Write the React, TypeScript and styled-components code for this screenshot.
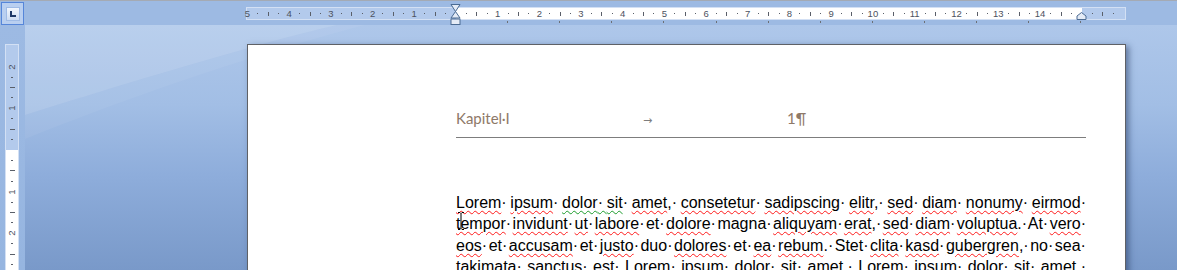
import React from "react"
import styled, { createGlobalStyle } from "styled-components"

// one quarter of a centimetre on the rulers at this zoom level
const Q = 10.425

const GlobalStyle = createGlobalStyle`
  html, body {
    margin: 0;
    padding: 0;
    overflow: hidden;
    background: #9dbae3;
  }
`

const Window = styled.div`
  display: grid;
  grid-template-columns: 25px 1fr;
  grid-template-rows: 24px 1fr;
  height: 270px;
  box-sizing: border-box;
  border-top: 1px solid #a4aab4;
  background: #9dbae3;
  font-family: "Liberation Sans", Arial, sans-serif;
`

const TabSelector = styled.div`
  margin: 1px 0 0 1px;
  width: 23px;
  height: 23px;
  box-sizing: border-box;
  border: 1px solid #5686d9;
  background: #b9cff0;
  display: flex;
  align-items: center;
  justify-content: center;
`

const TabFace = styled.div`
  width: 14px;
  height: 14px;
  box-sizing: border-box;
  border: 1px solid #9fbbe6;
  background: linear-gradient(#f3f7fd, #cddcf3);
  display: flex;
  align-items: center;
  justify-content: center;
`

const LGlyph = styled.span`
  width: 4px;
  height: 4px;
  margin: 1px 0 0 1px;
  border-left: 2px solid #1e3968;
  border-bottom: 2px solid #1e3968;
`

const TopBar = styled.div`
  display: flex;
  flex-direction: column;
  padding: 6px 0 0 221px;
`

const HRuler = styled.div`
  position: relative;
  width: 880px;
  height: 13px;
  box-sizing: border-box;
  border: 1px solid #d3e0f4;
  background: linear-gradient(
    to right,
    #b3caec 0 209px,
    #ffffff 209px 835px,
    #b3caec 835px
  );
`

const TickRow = styled.div<{ $vertical?: boolean }>`
  display: flex;
  flex-direction: ${(p) => (p.$vertical ? "column" : "row")};
  ${(p) => (p.$vertical ? "margin-top: -4.46px;" : "margin-left: -4.71px;")}
  ${(p) => (p.$vertical ? "width: 100%;" : "height: 100%;")}
`

const Cell = styled.div<{ $vertical?: boolean }>`
  flex: 0 0 ${Q}px;
  display: flex;
  align-items: center;
  justify-content: center;
`

const Num = styled.span<{ $vertical?: boolean }>`
  font-size: 9.5px;
  line-height: 10px;
  color: #4c5260;
  white-space: nowrap;
  ${(p) => (p.$vertical ? "transform: rotate(-90deg);" : "")}
`

const Tick = styled.span<{ $vertical?: boolean; $half?: boolean }>`
  background: #5a5f69;
  ${(p) =>
    p.$vertical
      ? `width: ${p.$half ? 5 : 2}px; height: 1px;`
      : `width: 1px; height: ${p.$half ? 4 : 1}px;`}
`

const IndentMarker = styled.svg<{ $left: number; $top: number }>`
  position: absolute;
  left: ${(p) => p.$left}px;
  top: ${(p) => p.$top}px;
  overflow: visible;
`

const TabStops = styled.div`
  margin: 1px 0 0 210px;
  width: 628px;
  height: 2px;
  background: repeating-linear-gradient(
    to right,
    transparent 0 51.1px,
    #6c6f75 51.1px 52.1px
  );
`

const LeftStrip = styled.div`
  padding: 19px 0 0 5px;
  background: linear-gradient(#9dbae3, #96b5e0);
  overflow: hidden;
`

const VRuler = styled.div`
  width: 14px;
  height: 260px;
  box-sizing: border-box;
  border: 1px solid #d3e0f4;
  background: linear-gradient(to bottom, #b3caec 0 105px, #ffffff 105px);
`

const Canvas = styled.div`
  position: relative;
  overflow: hidden;
  background: linear-gradient(
    180deg,
    #aec7ea 0px,
    #a2bee5 80px,
    #8eaddb 150px,
    #7999c9 245px
  );
`

const Swoosh = styled.svg`
  position: absolute;
  left: 0;
  top: 0;
  width: 100%;
  height: 100%;
`

const Page = styled.div`
  position: relative;
  margin: 19px 0 0 222px;
  width: 879px;
  height: 320px;
  box-sizing: border-box;
  padding: 63px 39px 0 208px;
  background: #ffffff;
  border: 1px solid #5f6166;
  box-shadow: 3px 2px 6px rgba(25, 45, 85, 0.5);
`

const Header = styled.div`
  display: grid;
  grid-template-columns: 187px 144px auto;
  align-items: baseline;
  padding-bottom: 6px;
  border-bottom: 1px solid #7d7d7d;
  font-family: Lato, "Open Sans", sans-serif;
  font-size: 15px;
  line-height: 20px;
  color: #8e7968;
`

const TabArrow = styled.span`
  font-family: "DejaVu Sans", sans-serif;
  font-size: 11px;
  color: #7d7d7d;
`

const Body = styled.div`
  position: relative;
  margin-top: 54px;
  font-family: "Liberation Sans", Arial, sans-serif;
  font-size: 16px;
  line-height: 21.3px;
  color: #000000;
`

const Line = styled.div`
  text-align: justify;
  text-align-last: justify;
`

const Dot = styled.span`
  display: inline-block;
  width: 0;
  white-space: nowrap;
`

const Squiggle = styled.span<{ $tone: "r" | "g" }>`
  text-decoration-line: underline;
  text-decoration-style: wavy;
  text-decoration-color: ${(p) => (p.$tone === "r" ? "#ff1a1a" : "#1c9c2c")};
  text-decoration-thickness: 1px;
  text-underline-offset: 2px;
`

const IBeam = styled.svg`
  position: absolute;
  left: 1px;
  top: 20px;
`

// * = spelling mark, + = grammar mark, _ = space inside one marked group
const bodyLines = [
  "*Lorem *ipsum +dolor_sit *amet, *consetetur *sadipscing *elitr, *sed *diam *nonumy *eirmod",
  "*tempor *invidunt *ut *labore et *dolore magna *aliquyam *erat, *sed *diam *voluptua. At *vero",
  "*eos et *accusam et *justo duo *dolores et *ea *rebum. Stet *clita *kasd *gubergren, no sea",
  "*takimata *sanctus *est *Lorem *ipsum *dolor *sit *amet. *Lorem *ipsum *dolor *sit *amet,",
]

const Space = () => (
  <>
    <Dot>·</Dot>{" "}
  </>
)

const Words = ({ text }: { text: string }) => {
  const tokens = text.split(" ")
  return (
    <>
      {tokens.map((tok, i) => {
        const tone = tok[0] === "*" ? "r" : tok[0] === "+" ? "g" : null
        const raw = tone ? tok.slice(1) : tok
        const m = raw.match(/^(.*?)([,.]?)$/)
        const word = m ? m[1] : raw
        const punct = m ? m[2] : ""
        const inner = word.split("_").map((part, j) => (
          <React.Fragment key={j}>
            {j > 0 && <Space />}
            {part}
          </React.Fragment>
        ))
        return (
          <React.Fragment key={i}>
            {tone ? <Squiggle $tone={tone}>{inner}</Squiggle> : inner}
            {punct}
            {i === tokens.length - 1 ? "·" : <Space />}
          </React.Fragment>
        )
      })}
    </>
  )
}

const Mark = ({ k, vertical, hidden }: { k: number; vertical?: boolean; hidden?: boolean }) => {
  if (hidden || k === 0) return <Cell $vertical={vertical} />
  if (k % 4 === 0)
    return (
      <Cell $vertical={vertical}>
        <Num $vertical={vertical}>{Math.abs(k / 4)}</Num>
      </Cell>
    )
  return (
    <Cell $vertical={vertical}>
      <Tick $vertical={vertical} $half={Math.abs(k % 4) === 2} />
    </Cell>
  )
}

const hMarks = Array.from({ length: 84 }, (_, i) => i - 20)
const vMarks = Array.from({ length: 23 }, (_, i) => i - 10)

export default function App() {
  return (
    <>
      <GlobalStyle />
      <Window>
        <TabSelector>
          <TabFace>
            <LGlyph />
          </TabFace>
        </TabSelector>

        <TopBar>
          <HRuler>
            <TickRow>
              {hMarks.map((k) => (
                <Mark key={k} k={k} hidden={k === 60} />
              ))}
            </TickRow>
            <IndentMarker $left={203} $top={-4} width="11" height="21" viewBox="0 0 11 21">
              <path d="M1 0.5 H10 L5.5 7.5 Z" fill="#e4ebf6" stroke="#4b6b93" />
              <path d="M5.5 7.5 L10 14 H1 Z" fill="#e4ebf6" stroke="#4b6b93" />
              <rect x="1" y="15" width="9" height="5.5" fill="#e4ebf6" stroke="#4b6b93" />
            </IndentMarker>
            <IndentMarker $left={829} $top={4} width="11" height="8" viewBox="0 0 11 8">
              <path d="M1 7.5 V4 L5.5 0.5 L10 4 V7.5 Z" fill="#e4ebf6" stroke="#4b6b93" />
            </IndentMarker>
          </HRuler>
          <TabStops />
        </TopBar>

        <LeftStrip>
          <VRuler>
            <TickRow $vertical>
              {vMarks.map((k) => (
                <Mark key={k} k={k} vertical hidden={k < -8} />
              ))}
            </TickRow>
          </VRuler>
        </LeftStrip>

        <Canvas>
          <Swoosh>
            <path d="M0 0 H312 C250 14 120 52 0 90 Z" fill="rgba(255,255,255,0.14)" />
            <path
              d="M0 90 C120 52 250 14 312 0 H340 C262 20 130 62 0 114 Z"
              fill="rgba(255,255,255,0.05)"
            />
          </Swoosh>
          <Page>
            <Header>
              <span>Kapitel·I</span>
              <TabArrow>→</TabArrow>
              <span>1¶</span>
            </Header>
            <Body>
              {bodyLines.map((l, i) => (
                <Line key={i}>
                  <Words text={l} />
                </Line>
              ))}
              <IBeam width="8" height="18" viewBox="0 0 8 18">
                <path
                  d="M1 0.5 H3 L4 1.5 L5 0.5 H7 M4 1.5 V16.5 M1 17.5 H3 L4 16.5 L5 17.5 H7"
                  fill="none"
                  stroke="#000"
                  strokeWidth="1"
                />
              </IBeam>
            </Body>
          </Page>
        </Canvas>
      </Window>
    </>
  )
}
